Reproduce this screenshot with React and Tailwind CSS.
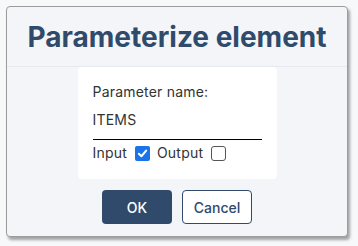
export default function App() {
  return (
    <div className="w-[358px] h-[246px] bg-[#f7f8fa] pt-[6px] pl-[6px] font-['Inter',sans-serif]">
      <div className="w-[342px] h-[231px] bg-[#f3f5f8] border border-[#9c9c9c] rounded-[4px] shadow-[2px_3px_3px_rgba(0,0,0,0.35)] flex flex-col">
        <div className="h-[60px] border-b border-[#e6e9ee] flex items-center justify-center">
          <h1 className="text-[28px] font-bold text-[#2f4a6b] tracking-[0px] leading-none pt-[1px]">Parameterize element</h1>
        </div>
        <div className="flex justify-center">
          <div className="w-[199px] h-[112px] bg-white rounded-[4px] px-[15px] pt-[16px] text-[14px] tracking-[0.2px] text-[#333]">
            <div className="leading-[18px]">Parameter name:</div>
            <div className="mt-[10px] leading-[18px] border-b border-black pb-[10px] w-[169px]">ITEMS</div>
            <div className="mt-[4px] flex items-center leading-[18px]">
              <span>Input</span>
              <span className="ml-[8px] w-[15px] h-[15px] rounded-[2px] bg-[#1a73e8] flex items-center justify-center">
                <svg width="11" height="11" viewBox="0 0 12 12" fill="none">
                  <path d="M2 6.3 L4.8 9 L10 2.8" stroke="white" strokeWidth="2.2" strokeLinecap="round" strokeLinejoin="round" />
                </svg>
              </span>
              <span className="ml-[7px]">Output</span>
              <span className="ml-[8px] w-[15px] h-[15px] rounded-[3px] border border-[#555] bg-white"></span>
            </div>
          </div>
        </div>
        <div className="flex justify-center gap-[10px] mt-[11px]">
          <button className="w-[70px] h-[34px] rounded-[4px] bg-[#2f4a6b] text-white text-[14px] font-medium">OK</button>
          <button className="w-[70px] h-[34px] rounded-[4px] bg-white border border-[#2f4a6b] text-[#2f4a6b] text-[14px] font-medium">Cancel</button>
        </div>
      </div>
    </div>
  );
}
